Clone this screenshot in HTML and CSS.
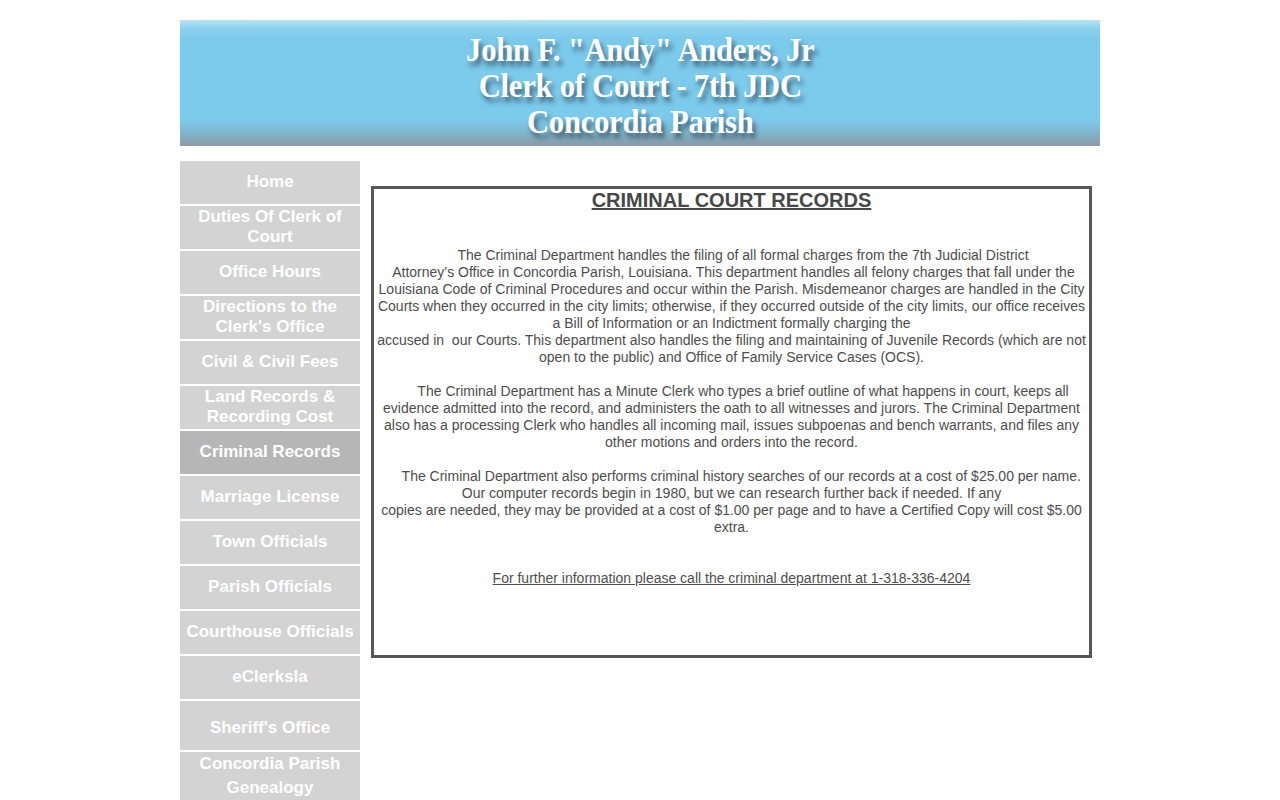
FILE: index.html
```html
<!DOCTYPE html>
<html>
<head>
<meta charset="utf-8">
<title>Criminal Records</title>
<link rel="stylesheet" href="styles.css">
</head>
<body>
<div class="page">
  <header class="banner">
    <div class="banner-text">
      <div>John F. "Andy" Anders, Jr</div>
      <div>Clerk of Court - 7th JDC</div>
      <div>Concordia Parish</div>
    </div>
  </header>
  <div class="main">
    <nav class="nav">
      <a class="nav-item">Home</a>
      <a class="nav-item">Duties Of Clerk of Court</a>
      <a class="nav-item">Office Hours</a>
      <a class="nav-item">Directions to the Clerk's Office</a>
      <a class="nav-item">Civil &amp; Civil Fees</a>
      <a class="nav-item">Land Records &amp; Recording Cost</a>
      <a class="nav-item active">Criminal Records</a>
      <a class="nav-item">Marriage License</a>
      <a class="nav-item">Town Officials</a>
      <a class="nav-item">Parish Officials</a>
      <a class="nav-item">Courthouse Officials</a>
      <a class="nav-item">eClerksla</a>
      <a class="nav-item tall">Sheriff's Office</a>
      <a class="nav-item tall2">Concordia Parish Genealogy</a>
    </nav>
    <section class="content">
      <h1 class="title">CRIMINAL COURT RECORDS</h1>
      <p class="para first">&nbsp; &nbsp; &nbsp; The Criminal Department handles the filing of all formal charges from the 7th Judicial District<br>
      &nbsp;Attorney’s Office in Concordia Parish, Louisiana. This department handles all felony charges that fall under the<br>
      Louisiana Code of Criminal Procedures and occur within the Parish. Misdemeanor charges are handled in the City<br>
      Courts when they occurred in the city limits; otherwise, if they occurred outside of the city limits, our office receives<br>
      a Bill of Information or an Indictment formally charging the<br>
      accused in&nbsp; our Courts. This department also handles the filing and maintaining of Juvenile Records (which are not<br>
      open to the public) and Office of Family Service Cases (OCS).</p>
      <p class="para">&nbsp; &nbsp; &nbsp; The Criminal Department has a Minute Clerk who types a brief outline of what happens in court, keeps all<br>
      evidence admitted into the record, and administers the oath to all witnesses and jurors. The Criminal Department<br>
      also has a processing Clerk who handles all incoming mail, issues subpoenas and bench warrants, and files any<br>
      other motions and orders into the record.</p>
      <p class="para">&nbsp; &nbsp; &nbsp;The Criminal Department also performs criminal history searches of our records at a cost of $25.00 per name.<br>
      Our computer records begin in 1980, but we can research further back if needed. If any<br>
      copies are needed, they may be provided at a cost of $1.00 per page and to have a Certified Copy will cost $5.00<br>
      extra.</p>
      <p class="para link-para"><a class="info-link">For further information please call the criminal department at 1-318-336-4204</a></p>
    </section>
  </div>
</div>
</body>
</html>
```
FILE: styles.css
```css
html, body {
  margin: 0;
  padding: 0;
  background: #ffffff;
}
.page {
  width: 920px;
  margin: 20px auto 0;
}
.banner {
  height: 126px;
  background: linear-gradient(to bottom, #b9e3f5 0px, #8fd2ef 8px, #7ccaec 18px, #7ccaec 100px, #7fb7cf 112px, #8b9ba4 126px);
  display: flex;
  justify-content: center;
  align-items: flex-start;
}
.banner-text {
  margin-top: 12px;
  font-family: "Liberation Serif", "Times New Roman", serif;
  font-weight: bold;
  font-size: 33px;
  line-height: 36px;
  color: #ffffff;
  text-align: center;
  text-shadow: 3px 5px 5px rgba(40, 60, 80, 0.75);
  transform: scaleX(0.93);
  letter-spacing: -0.3px;
  white-space: nowrap;
}
.main {
  display: flex;
  align-items: flex-start;
  margin-top: 15px;
}
.nav {
  width: 180px;
  display: flex;
  flex-direction: column;
  gap: 2px;
  flex-shrink: 0;
}
.nav-item {
  height: 43px;
  background: #d3d3d3;
  color: #ffffff;
  font-family: "Liberation Sans", Arial, sans-serif;
  font-weight: bold;
  font-size: 17px;
  line-height: 20px;
  text-align: center;
  display: flex;
  align-items: center;
  justify-content: center;
  padding: 0 6px 2px;
  box-sizing: border-box;
  cursor: pointer;
}
.nav-item.active {
  background: #b6b6b6;
}
.nav-item.tall {
  height: 49px;
  padding-top: 4px;
  padding-bottom: 0;
}
.nav-item.tall2 {
  height: 52px;
  line-height: 24px;
  align-items: flex-start;
  padding-bottom: 0;
}
.content {
  margin-left: 11px;
  margin-top: 25px;
  width: 721px;
  height: 472px;
  box-sizing: border-box;
  border: 3px solid #575757;
  padding: 0;
  font-family: "Liberation Sans", Arial, sans-serif;
  color: #4d4d4d;
  text-align: center;
}
.title {
  margin: 0;
  padding-top: 0;
  font-size: 20px;
  line-height: 22px;
  font-weight: bold;
  text-decoration: underline;
  color: #474747;
}
.para {
  margin: 0 0 17px;
  font-size: 14px;
  line-height: 17px;
  white-space: nowrap;
}
.para.first {
  margin-top: 36px;
}
.link-para {
  margin-top: 34px;
}
.info-link {
  text-decoration: underline;
  color: #4d4d4d;
}
```
